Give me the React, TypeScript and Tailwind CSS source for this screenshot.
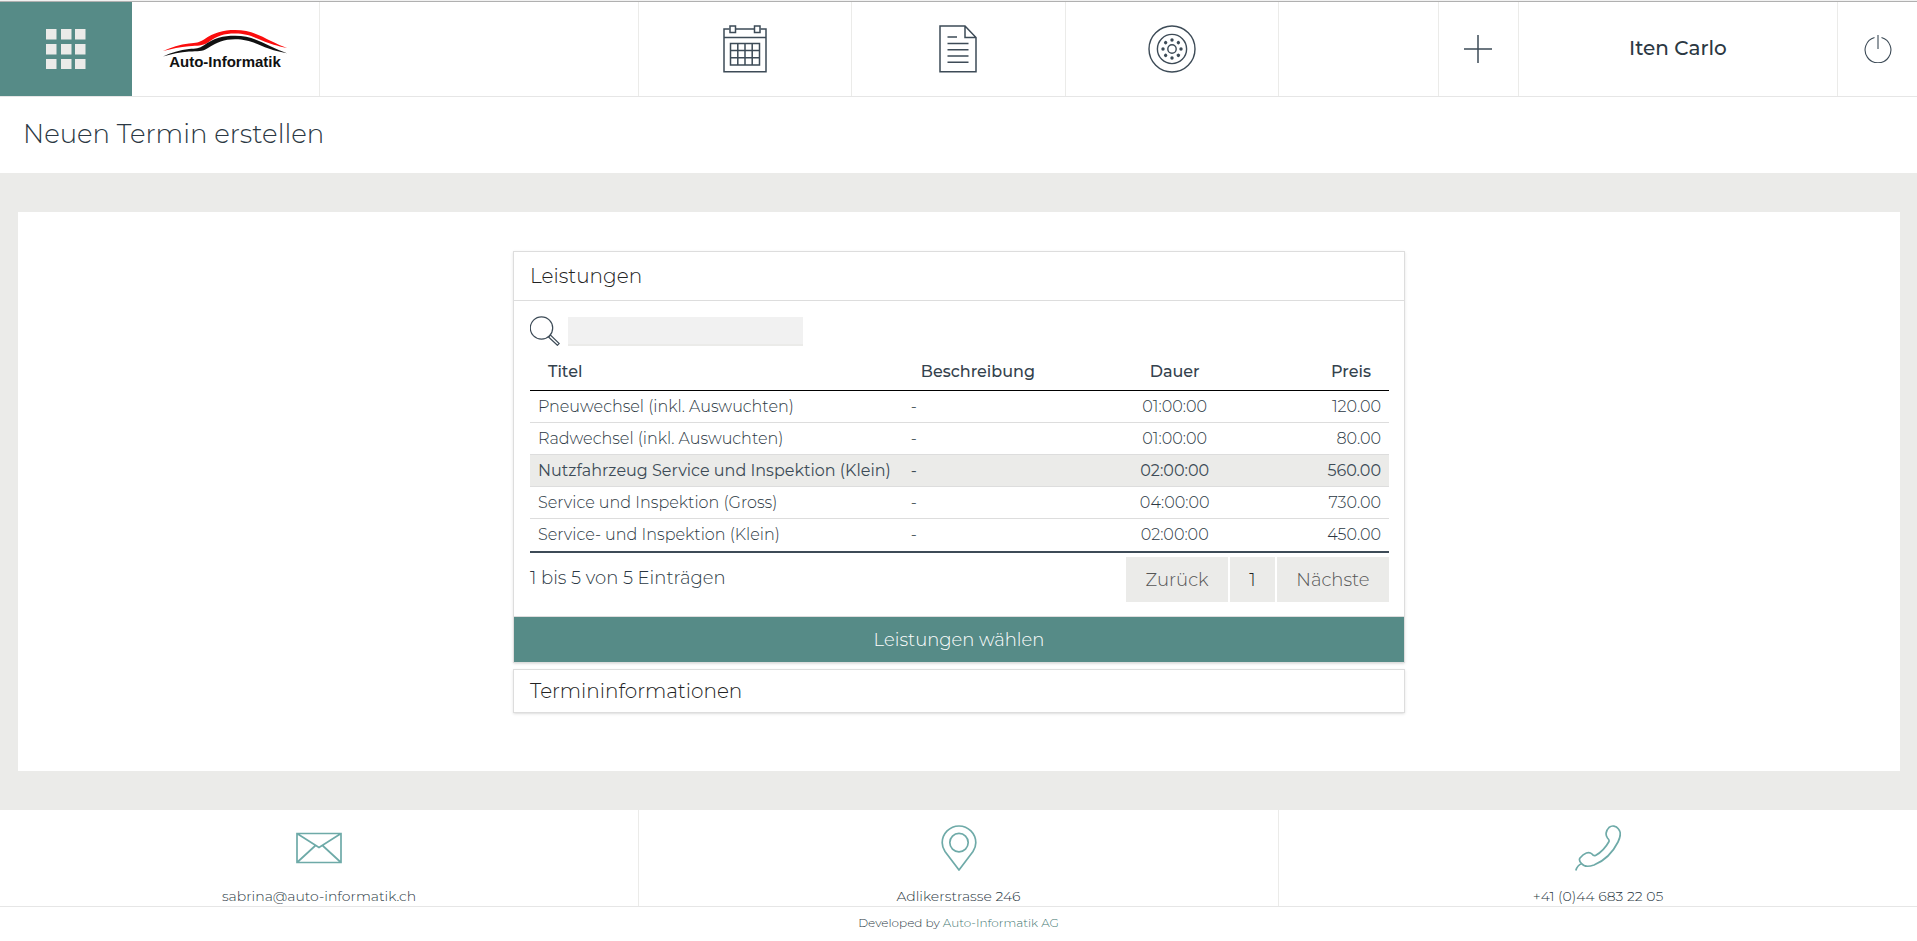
import { useState } from 'react';
import type { ReactNode } from 'react';

type Service = {
  id: number;
  title: string;
  description: string;
  duration: string;
  price: string;
};

const services: Service[] = [
  { id: 1, title: 'Pneuwechsel (inkl. Auswuchten)', description: '-', duration: '01:00:00', price: '120.00' },
  { id: 2, title: 'Radwechsel (inkl. Auswuchten)', description: '-', duration: '01:00:00', price: '80.00' },
  { id: 3, title: 'Nutzfahrzeug Service und Inspektion (Klein)', description: '-', duration: '02:00:00', price: '560.00' },
  { id: 4, title: 'Service und Inspektion (Gross)', description: '-', duration: '04:00:00', price: '730.00' },
  { id: 5, title: 'Service- und Inspektion (Klein)', description: '-', duration: '02:00:00', price: '450.00' },
];

function MenuIcon() {
  return (
    <svg width="40" height="40" viewBox="0 0 40 40" fill="#ebebe9" aria-hidden="true">
      {[0, 15, 30].map((y) =>
        [0, 15, 29].map((x) => <rect key={`${x}-${y}`} x={x} y={y} width="10.5" height="10.5" />)
      )}
    </svg>
  );
}

function Logo() {
  return (
    <svg width="126" height="42" viewBox="0 0 126 42" role="img" aria-label="Auto-Informatik">
      <g transform="translate(1 2)">
        <path
          d="M0 21C8 17 17 14.500 26 13.400C33 13 36 12.500 41 9.500C51 2.500 60 0 72 0C87 0 97 5.500 108 11C114 14 119 16 124 18C114 16 107 13.800 99 10.500C90 6.500 83 3.600 72 3.600C61 3.600 54 6 45 12.500C39 16.200 35 15.400 26 16.200C17 17 9 18.600 0 21Z"
          fill="#fb0d0d"
        />
        <path
          d="M0 26.500C8 22.700 17 20 26 19C33 18.400 36 18.600 41 15.200C51 8 60 5.800 72 5.800C87 5.800 97 11 108 16.500C114 19.400 119 21.500 124 23.200C114 21.500 107 19.300 99 16C90 12 83 9.200 72 9.200C61 9.200 54 12 45 18C39 22 35 21 26 21.600C17 22.300 9 24 0 26.500Z"
          fill="#111"
        />
      </g>
      <text x="63" y="39" textAnchor="middle" fontFamily="'Liberation Sans', sans-serif" fontWeight="700" fontSize="15" fill="#111">
        Auto-Informatik
      </text>
    </svg>
  );
}

function CalendarIcon() {
  return (
    <svg width="44" height="48" viewBox="0 0 44 48" fill="none" stroke="#3d4b57" strokeWidth="1.500" aria-hidden="true">
      <path d="M6.500 4H1V46.800H43V4H37.500M12.500 4H31.500M1 12.500H43" />
      <path d="M7 1H12.500V7.500H7ZM31.500 1H37V7.500H31.500Z" />
      <path d="M7.500 18.500H36.500V40H7.500ZM14.800 18.500V40M22 18.500V40M29.200 18.500V40M7.500 25.600H36.500M7.500 32.800H36.500" />
    </svg>
  );
}

function DocumentIcon() {
  return (
    <svg width="38" height="48" viewBox="0 0 38 48" fill="none" stroke="#3d4b57" strokeWidth="1.500" aria-hidden="true">
      <path d="M1 1H26L37 12.500V46.800H1ZM26 1V12.500H37" />
      <path d="M8.500 12H18M8.500 18.500H29.500M8.500 24.800H29.500M8.500 31H29.500M8.500 37.200H29.500" />
    </svg>
  );
}

function WheelIcon() {
  const dots = [0, 45, 90, 135, 180, 225, 270, 315];
  return (
    <svg width="48" height="48" viewBox="0 0 48 48" fill="none" stroke="#3d4b57" strokeWidth="1.400" aria-hidden="true">
      <circle cx="24" cy="24" r="23" />
      <circle cx="24" cy="24" r="14.600" />
      <circle cx="24" cy="24" r="4.200" />
      {dots.map((deg) => (
        <circle key={deg} cx="24" cy="15" r="1.700" fill="#3d4b57" stroke="none" transform={`rotate(${deg} 24 24)`} />
      ))}
    </svg>
  );
}

function PlusIcon() {
  return (
    <svg width="28" height="28" viewBox="0 0 28 28" stroke="#3d4b57" strokeWidth="1.500" aria-hidden="true">
      <path d="M14 0V28M0 14H28" />
    </svg>
  );
}

function PowerIcon() {
  return (
    <svg width="28" height="28" viewBox="0 0 28 28" fill="none" stroke="#3d4b57" strokeWidth="1.100" aria-hidden="true">
      <path d="M10.500 2.500A12.900 12.900 0 1 0 17.500 2.500M14 0V14" />
    </svg>
  );
}

function SearchIcon() {
  return (
    <svg width="30" height="30" viewBox="0 0 30 30" fill="none" stroke="#3d4b57" strokeWidth="1.200" aria-hidden="true">
      <circle cx="11.500" cy="12" r="11.200" />
      <path d="M18.500 21L20.500 19L29.200 27.500L27.400 29.300Z" />
    </svg>
  );
}

function MailIcon() {
  return (
    <svg width="46" height="46" viewBox="0 0 46 46" fill="none" stroke="#6eaaa8" strokeWidth="1.700" aria-hidden="true">
      <path d="M1 8.500H45V37.500H1ZM1 8.500L23 22.500L45 8.500M1 37.500L19.500 20.500M45 37.500L26.500 20.500" />
    </svg>
  );
}

function PinIcon() {
  return (
    <svg width="46" height="46" viewBox="0 0 46 46" fill="none" stroke="#6eaaa8" strokeWidth="1.700" strokeLinejoin="round" aria-hidden="true">
      <path d="M23 45L9 26.500C7 23.500 6.200 21 6.200 17.800A16.800 16.800 0 0 1 39.800 17.800C39.800 21 39 23.500 37 26.500Z" />
      <circle cx="23" cy="17.600" r="9.200" />
    </svg>
  );
}

function PhoneIcon() {
  return (
    <svg width="46" height="46" viewBox="0 0 46 46" fill="none" stroke="#6eaaa8" strokeWidth="1.700" strokeLinejoin="round" aria-hidden="true">
      <path d="M5 33C9 28 14 26 17 29C18 30.500 19 31 20.500 30.500C25 28 31 22 34 16.500C34.500 15 33.500 14 32.500 13C30 10 31 5.500 34 2.500C37 0 41 .8 43.500 4C46 7 45.500 12 43 17C38 27 29 36 19 40C13 42 9 42 6.500 38.500C4.500 36.500 4 34.500 5 33Z" />
      <path d="M6.500 38.800C4 39.500 2 42 .8 45.500" />
    </svg>
  );
}

function NavLink({ label, children }: { label: string; children: ReactNode }) {
  return (
    <a href="#" aria-label={label} className="flex flex-1 items-center justify-center border-l border-[#ebebe9] first:border-l-0">
      {children}
    </a>
  );
}

function Header() {
  return (
    <header className="grid h-[95px] grid-cols-24 border-b border-[#e6e6e6]">
      <div className="col-span-4 flex border-r border-[#ebebe9]">
        <button type="button" aria-label="Menu" className="flex w-[132px] shrink-0 items-center justify-center bg-[#568b87]">
          <MenuIcon />
        </button>
        <a href="#" className="flex flex-1 items-center justify-center">
          <Logo />
        </a>
      </div>
      <div className="col-span-4 border-r border-[#ebebe9]" />
      <nav className="col-span-8 flex">
        <NavLink label="Termine">
          <CalendarIcon />
        </NavLink>
        <NavLink label="Dokumente">
          <DocumentIcon />
        </NavLink>
        <NavLink label="Reifen">
          <WheelIcon />
        </NavLink>
      </nav>
      <div className="col-span-2 border-l border-[#ebebe9]" />
      <button type="button" aria-label="Neu" className="flex items-center justify-center border-l border-[#ebebe9]">
        <PlusIcon />
      </button>
      <a href="#" className="col-span-4 flex items-center justify-center border-l border-[#ebebe9] pb-0.5 text-xl font-medium">
        Iten Carlo
      </a>
      <button type="button" aria-label="Abmelden" className="flex items-center justify-center border-l border-[#ebebe9]">
        <PowerIcon />
      </button>
    </header>
  );
}

function ServiceTable() {
  const [selected, setSelected] = useState(3);
  const [search, setSearch] = useState('');

  const visible = services.filter((s) => s.title.toLowerCase().includes(search.toLowerCase()));

  return (
    <div className="pt-[14px] pr-[15px] pb-[14px] pl-4">
      <div className="flex h-8 items-center gap-2">
        <label htmlFor="search" aria-label="Suchen">
          <SearchIcon />
        </label>
        <input
          id="search"
          type="text"
          value={search}
          onChange={(e) => setSearch(e.target.value)}
          className="h-[29px] w-[235px] border-b-2 border-[#ebebe9] bg-[#f1f1f1] px-2 outline-none"
        />
      </div>

      <table className="w-full table-fixed border-separate border-spacing-0 border-b-2 border-[#3d4b57] text-base">
        <thead>
          <tr className="h-11 text-[#34424d] *:border-b *:border-black *:pt-1.5 *:font-medium">
            <th className="w-[43.4%] px-[18px] text-left">Titel</th>
            <th className="w-[24.8%] px-[18px] text-left">Beschreibung</th>
            <th className="w-[13.7%] text-center">Dauer</th>
            <th className="px-[18px] text-right">Preis</th>
          </tr>
        </thead>
        <tbody>
          {visible.map((s) => (
            <tr
              key={s.id}
              onClick={() => setSelected(s.id)}
              className={
                s.id === selected
                  ? 'h-8 cursor-pointer bg-[#ebebe9] font-normal text-[#3d4b57] *:border-b *:border-[#dddddd] last:*:border-b-0'
                  : 'h-8 cursor-pointer *:border-b *:border-[#dddddd] last:*:border-b-0'
              }
            >
              <td className="px-2 whitespace-nowrap">{s.title}</td>
              <td className="px-2">{s.description}</td>
              <td className="text-center">{s.duration}</td>
              <td className="px-2 text-right">{s.price}</td>
            </tr>
          ))}
        </tbody>
      </table>

      <div className="flex justify-between pt-1 text-lg">
        <p className="pt-[7px]">
          1 bis {visible.length} von {visible.length} Einträgen
        </p>
        <div className="flex h-[45px] gap-0.5 text-[#555555]">
          <button type="button" className="w-[102px] bg-[#ebebe9]">
            Zurück
          </button>
          <button type="button" className="w-[45px] bg-[#ebebe9] text-[#222222]">
            1
          </button>
          <button type="button" className="w-28 bg-[#ebebe9]">
            Nächste
          </button>
        </div>
      </div>
    </div>
  );
}

function Footer() {
  return (
    <footer className="bg-white text-center">
      <div className="grid grid-cols-3 border-b border-[#e6e6e6] text-sm">
        <a href="mailto:sabrina@auto-informatik.ch" className="flex flex-col items-center border-r border-[#ebebe9] pt-[15px]">
          <MailIcon />
          <span className="mt-[15px]">sabrina@auto-informatik.ch</span>
        </a>
        <a href="#" className="flex flex-col items-center pt-[15px]">
          <PinIcon />
          <span className="mt-[15px]">Adlikerstrasse 246</span>
        </a>
        <a href="tel:+41446832205" className="flex flex-col items-center border-l border-[#ebebe9] pt-[15px]">
          <PhoneIcon />
          <span className="mt-[15px]">+41 (0)44 683 22 05</span>
        </a>
      </div>
      <p className="py-2 text-xs">
        Developed by{' '}
        <a href="#" className="text-[#437772]">
          Auto-Informatik AG
        </a>
      </p>
    </footer>
  );
}

export default function App() {
  return (
    <div className="min-h-screen border-t border-[#f1f1f1] bg-white font-['Montserrat','Inter',sans-serif] font-light text-[#2b3843]">
      <div className="border-t border-[#b0b0b0]" />
      <Header />
      <h1 className="flex h-[76px] items-center px-[23px] pb-0.5 text-[26px]">Neuen Termin erstellen</h1>

      <main className="bg-[#ebebe9] py-[39px] pr-[17px] pl-[18px]">
        <div className="bg-white pt-[39px] pb-[58px]">
          <div className="mx-auto w-full max-w-[892px] space-y-1.5">
            <section className="border border-[#dddddd] shadow-sm">
              <h2 className="flex h-[49px] items-center border-b border-[#dddddd] px-4 text-xl text-[#222222]">Leistungen</h2>
              <ServiceTable />
              <button type="button" className="h-[46px] w-full border-t border-[#dddddd] bg-[#568b87] text-lg text-white">
                Leistungen wählen
              </button>
            </section>
            <section className="border border-[#dddddd] shadow-sm">
              <h2 className="flex h-[42px] items-center px-4 text-xl text-[#222222]">Termininformationen</h2>
            </section>
          </div>
        </div>
      </main>

      <Footer />
    </div>
  );
}
